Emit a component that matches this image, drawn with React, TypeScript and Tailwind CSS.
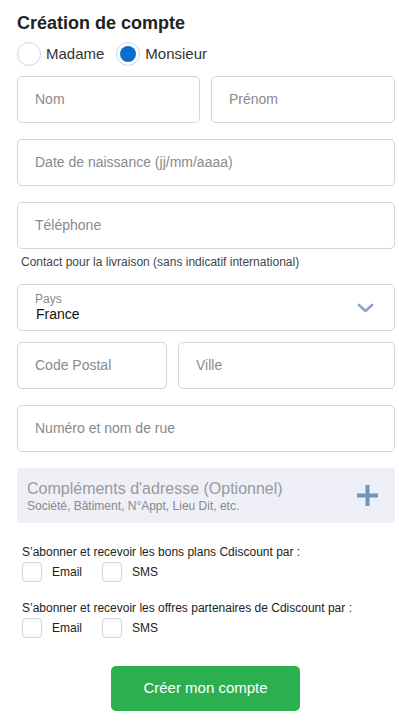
import React from "react";

const font = { fontFamily: '"Liberation Sans", Arial, sans-serif' };

function Field({ label, className = "" }: { label: string; className?: string }) {
  return (
    <div className={`h-[47px] border border-[#cdd6e3] rounded-[5px] bg-white flex items-center px-[17px] text-[14px] text-[#8a8a8a] ${className}`}>
      {label}
    </div>
  );
}

function Check({ label }: { label: string }) {
  return (
    <div className="flex items-center">
      <div className="w-[20px] h-[20px] border border-[#cbd5e2] rounded-[4px] bg-white" />
      <span className="ml-[10px] text-[12px] text-[#222]">{label}</span>
    </div>
  );
}

export default function App() {
  return (
    <div style={font} className="w-[399px] h-[726px] bg-white pl-[17px] pr-[4px] text-[#222]">
      <h1 className="pt-[11px] text-[18px] font-bold leading-[24px] text-[#222]">Création de compte</h1>
      <div className="flex items-center mt-[7px] h-[24px]">
        <div className="w-[24px] h-[24px] rounded-full border border-[#cdd6e3] bg-white" />
        <span className="ml-[5px] text-[15px] text-[#333]">Madame</span>
        <div className="ml-[12px] w-[24px] h-[24px] rounded-full border border-[#cdd6e3] bg-white flex items-center justify-center">
          <div className="w-[16px] h-[16px] rounded-full bg-[#0b6cc9]" />
        </div>
        <span className="ml-[5px] text-[15px] text-[#333]">Monsieur</span>
      </div>

      <div className="flex gap-[11px] mt-[10px]">
        <Field label="Nom" className="w-[183px]" />
        <Field label="Prénom" className="flex-1" />
      </div>
      <Field label="Date de naissance (jj/mm/aaaa)" className="mt-[16px]" />
      <Field label="Téléphone" className="mt-[16px]" />
      <p className="mt-[6px] ml-[4px] text-[12px] text-[#444] leading-[14px]">Contact pour la livraison (sans indicatif international)</p>

      <div className="mt-[15px] h-[47px] border border-[#cdd6e3] rounded-[5px] flex items-center justify-between pl-[17px] pr-[20px]">
        <div className="flex flex-col">
          <span className="text-[12px] text-[#888] leading-[14px]">Pays</span>
          <span className="text-[14px] text-[#111] leading-[17px] ml-[1px]">France</span>
        </div>
        <svg width="17" height="10" viewBox="0 0 17 10" fill="none">
          <path d="M2 2 L8.5 8 L15 2" stroke="#8ea4c3" strokeWidth="2.6" strokeLinecap="round" strokeLinejoin="round" />
        </svg>
      </div>

      <div className="flex gap-[11px] mt-[11px]">
        <Field label="Code Postal" className="w-[150px]" />
        <Field label="Ville" className="flex-1" />
      </div>
      <Field label="Numéro et nom de rue" className="mt-[16px]" />

      <div className="mt-[16px] h-[55px] bg-[#efeff7] flex items-center justify-between pl-[10px] pr-[17px]">
        <div className="flex flex-col">
          <span className="text-[16px] text-[#9a9a9a] leading-[19px]">Compléments d'adresse (Optionnel)</span>
          <span className="text-[12px] text-[#8a8a8a] leading-[14px] mt-[1px]">Société, Bâtiment, N°Appt, Lieu Dit, etc.</span>
        </div>
        <svg width="21" height="21" viewBox="0 0 21 21">
          <rect x="8.5" y="0" width="4" height="21" fill="#6e95b9" />
          <rect x="0" y="8.5" width="21" height="4" fill="#6e95b9" />
        </svg>
      </div>

      <div className="mt-[22px] ml-[5px]">
        <p className="text-[12px] text-[#222] leading-[14px]">S’abonner et recevoir les bons plans Cdiscount par :</p>
        <div className="flex gap-[20px] mt-[3px]">
          <Check label="Email" />
          <Check label="SMS" />
        </div>
      </div>
      <div className="mt-[19px] ml-[5px]">
        <p className="text-[12px] text-[#222] leading-[14px]">S’abonner et recevoir les offres partenaires de Cdiscount par :</p>
        <div className="flex gap-[20px] mt-[3px]">
          <Check label="Email" />
          <Check label="SMS" />
        </div>
      </div>

      <div className="flex mt-[28px] pl-[94px]">
        <button style={font} className="w-[189px] h-[45px] rounded-[5px] bg-[#2cb04f] text-white text-[15px]">Créer mon compte</button>
      </div>
    </div>
  );
}
